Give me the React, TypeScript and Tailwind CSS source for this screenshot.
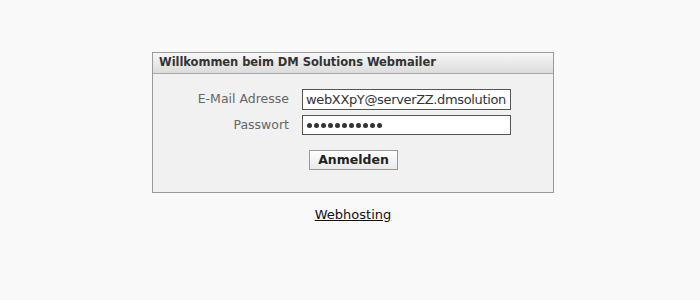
export default function App() {
  const font = { fontFamily: '"DejaVu Sans", Verdana, sans-serif' };
  const dots = Array.from({ length: 11 });
  return (
    <div className="w-[700px] h-[300px] bg-[#f9f9f9] overflow-hidden" style={font}>
      <div className="pt-[52px] pl-[152px]">
        <div className="w-[402px] h-[141px] border border-[#9a9a9a] bg-[#f1f1f1] flex flex-col">
          <div className="h-[21px] border-b border-[#a9a9a9] bg-gradient-to-b from-[#f7f7f7] to-[#dcdcdc] pl-[6px] flex items-center">
            <span className="text-[11.5px] font-bold text-[#333] tracking-[-0.05px]">Willkommen beim DM Solutions Webmailer</span>
          </div>
          <div className="flex flex-col pt-[15px]">
            <div className="flex items-center h-[21px]">
              <label className="w-[136px] text-right text-[12.5px] text-[#666]">E-Mail Adresse</label>
              <div className="ml-[13px] w-[209px] h-[21px] border border-[#555] bg-white flex items-center pl-[3px] text-[13px] text-[#333] overflow-hidden whitespace-nowrap tracking-[-0.35px]">webXXpY@serverZZ.dmsolution</div>
            </div>
            <div className="flex items-center h-[20px] mt-[5px]">
              <label className="w-[136px] text-right text-[12.5px] text-[#666]">Passwort</label>
              <div className="ml-[13px] w-[209px] h-[20px] border border-[#555] bg-white flex items-center pl-[4px] gap-[2px]">
                {dots.map((_, i) => (
                  <span key={i} className="w-[5px] h-[5px] rounded-full bg-[#333]" />
                ))}
              </div>
            </div>
            <div className="flex pl-[156px] mt-[15px]">
              <button className="w-[89px] h-[20px] border border-[#999] bg-gradient-to-b from-white to-[#e9e9e9] text-[12.5px] font-bold text-[#222] flex items-center justify-center" style={font}>Anmelden</button>
            </div>
          </div>
        </div>
        <div className="w-[402px] flex justify-center mt-[12px]">
          <a className="text-[13px] text-[#111] underline">Webhosting</a>
        </div>
      </div>
    </div>
  );
}
